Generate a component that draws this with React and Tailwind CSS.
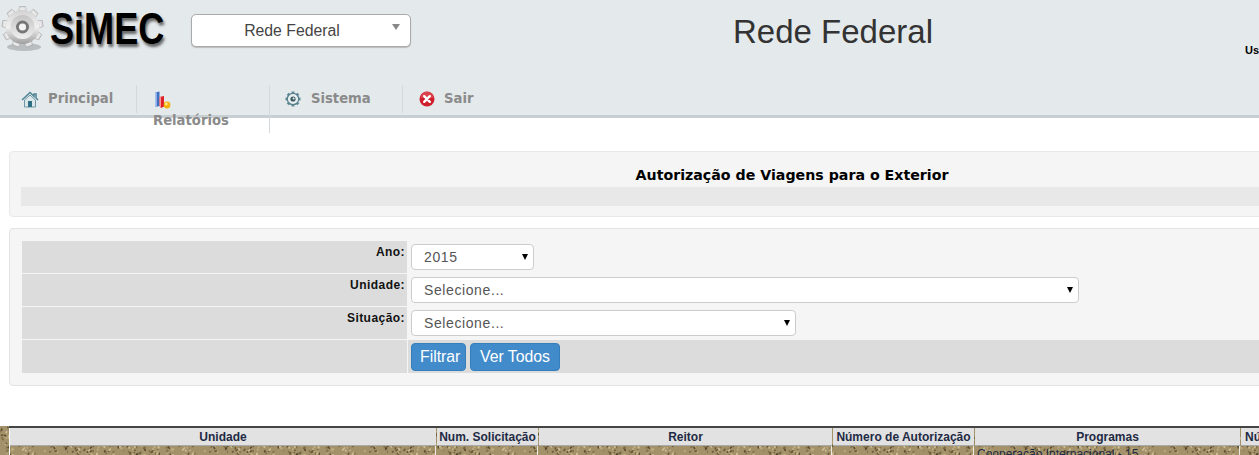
import React from "react";

function Gear() {
  const teeth = [];
  for (let i = 0; i < 9; i++) teeth.push(i * 40);
  return (
    <svg width="48" height="52" viewBox="0 0 48 52" className="shrink-0">
      <defs>
        <linearGradient id="g1" x1="0" y1="0" x2="0" y2="1">
          <stop offset="0" stopColor="#d2d2d2" />
          <stop offset="0.5" stopColor="#f0f0f0" />
          <stop offset="1" stopColor="#a0a0a0" />
        </linearGradient>
        <linearGradient id="g2" x1="0" y1="0" x2="0" y2="1">
          <stop offset="0" stopColor="#c4c4c4" />
          <stop offset="1" stopColor="#efefef" />
        </linearGradient>
      </defs>
      <ellipse cx="24" cy="47" rx="17" ry="4" fill="#8e9396" opacity="0.5" />
      <g fill="url(#g1)" stroke="#9c9c9c" strokeWidth="0.5">
        {teeth.map((a) => (
          <path key={a} d="M18.5 12 L19.5 6.5 H25.5 L26.5 12 Z" transform={`rotate(${a} 22.5 27)`} />
        ))}
      </g>
      <circle cx="22.5" cy="27" r="17" fill="url(#g1)" />
      <circle cx="22.5" cy="27" r="12" fill="url(#g2)" />
      <circle cx="22.5" cy="27" r="6.5" fill="#777" />
      <circle cx="22.5" cy="27" r="3.6" fill="#f4f4f4" />
    </svg>
  );
}

function HomeIcon() {
  return (
    <svg width="18" height="17" viewBox="0 0 18 17" className="shrink-0">
      <path d="M1 9 L9 1.5 L13 5.2 V3 H15 V7 L17 9" fill="none" stroke="#4f8494" strokeWidth="1.5" />
      <path d="M3.5 9 L9 4 L14.5 9 V16 H3.5 Z" fill="#dbe6ea" stroke="#6d97a4" strokeWidth="1" />
      <rect x="7" y="10" width="4" height="6" fill="#2f6f84" />
    </svg>
  );
}

function ChartIcon() {
  return (
    <svg width="18" height="18" viewBox="0 0 18 18" className="shrink-0">
      <path d="M2 1.5 L6.5 0.5 V15 L2 16 Z" fill="#3f6fc2" />
      <path d="M2 1.5 L3.8 1.1 V15.6 L2 16 Z" fill="#a6c3ee" />
      <path d="M6.5 6 L11 5 V15.5 L8 17 L6.5 15 Z" fill="#dc2128" />
      <path d="M6.5 6 L8 5.7 V16.6 L6.5 15 Z" fill="#f59a9a" />
      <circle cx="14" cy="14" r="3.4" fill="#f2b310" />
      <circle cx="13.3" cy="13" r="1.4" fill="#fdea8e" />
    </svg>
  );
}

function CogIcon() {
  const t = [0, 45, 90, 135, 180, 225, 270, 315];
  return (
    <svg width="16" height="16" viewBox="0 0 16 16" className="shrink-0">
      {t.map((a) => (
        <rect key={a} x="6.6" y="0.5" width="2.8" height="3" fill="#5f8792" transform={`rotate(${a} 8 8)`} />
      ))}
      <circle cx="8" cy="8" r="5.7" fill="#e8eef0" stroke="#55808c" strokeWidth="1.2" />
      <circle cx="8" cy="8" r="2.6" fill="#3f5a63" />
      <circle cx="8.6" cy="7.4" r="1" fill="#e8eef0" />
    </svg>
  );
}

function CloseIcon() {
  return (
    <svg width="16" height="16" viewBox="0 0 16 16" className="shrink-0">
      <circle cx="8" cy="8" r="7.5" fill="#cf1f2c" />
      <path d="M1.5 7 A6.5 6.5 0 0 1 14.5 7 Z" fill="#e55a63" opacity="0.6" />
      <path d="M5.2 5.2 L10.8 10.8 M10.8 5.2 L5.2 10.8" stroke="#fff" strokeWidth="2.4" strokeLinecap="round" />
    </svg>
  );
}

function Texture() {
  const marks = [];
  let s = 11;
  const r = () => ((s = (s * 16807) % 2147483647) % 1000) / 1000;
  const cols = ["#d9cba2", "#5e4f2e", "#463a20", "#c4b184", "#75643e"];
  for (let i = 0; i < 420; i++) {
    const x = r() * 160;
    const y = r() * 40;
    const dx = -2 + r() * 5;
    const dy = -3 + r() * 6;
    marks.push(
      <path
        key={i}
        d={`M${x.toFixed(1)} ${y.toFixed(1)} l${dx.toFixed(1)} ${dy.toFixed(1)}`}
        stroke={cols[i % 5]}
        strokeWidth="1.6"
        opacity="0.8"
      />
    );
  }
  return (
    <svg className="absolute inset-0 w-full h-full" aria-hidden="true">
      <defs>
        <pattern id="tex" width="160" height="40" patternUnits="userSpaceOnUse">
          <rect width="160" height="40" fill="#a3916a" />
          {marks}
        </pattern>
      </defs>
      <rect width="100%" height="100%" fill="url(#tex)" />
    </svg>
  );
}

function Arrow() {
  return (
    <span className="absolute right-[6px] top-[10px] w-0 h-0 border-l-[3px] border-r-[3px] border-t-[6px] border-l-transparent border-r-transparent border-t-black pointer-events-none" />
  );
}

function Select({ width, text }) {
  return (
    <div className={"relative " + width}>
      <select className="appearance-none block w-full h-[26px] bg-white border border-[#ccc] rounded-[4px] pl-[12px] font-['Liberation_Sans',sans-serif] text-[14px] tracking-[0.6px] text-[#555]">
        <option>{text}</option>
      </select>
      <Arrow />
    </div>
  );
}

const menuText = "font-['DejaVu_Sans',sans-serif] font-bold text-[13.2px] leading-[18px] text-[#8a8a8a]";
const labelCell = "bg-[#dcdcdc] flex justify-end pr-[2px] pt-[2px] font-['Liberation_Sans',sans-serif] font-bold text-[12px] leading-[18px] tracking-[0.45px] text-[#111]";
const btn = "h-[28px] bg-[#428bca] border border-[#357ebd] rounded-[4px] text-white font-['Liberation_Sans',sans-serif] text-[15.8px] leading-[26px] px-[8px]";
const th = "bg-[#e2e2e2] border-b border-[#aaa] h-[18px] flex items-center justify-center font-['Liberation_Sans',sans-serif] font-bold text-[12px] text-[#1f2a44] whitespace-nowrap overflow-hidden";
const cols = "grid grid-cols-[426px_101px_293px_141px_265px_200px] gap-x-[1px]";

export default function App() {
  return (
    <div className="w-[1259px] h-[455px] overflow-hidden bg-white">
      <div className="w-[1575px] flex flex-col">
        <header className="h-[118px] bg-[#e4e9ec] border-b-[3px] border-[#c8cfd3]">
          <div className="h-[85px] flex items-start">
            <div className="w-[191px] flex items-start">
              <Gear />
              <span className="inline-block origin-left scale-x-[0.82] font-['Liberation_Sans',sans-serif] font-bold text-[44px] leading-[58px] text-black [text-shadow:2px_3px_3px_#666] ml-[2px]">
                SiMEC
              </span>
            </div>
            <div className="w-[220px] h-[33px] mt-[14px] bg-white border border-[#aaa] rounded-[5px] shadow-[0_1px_1px_#bbb] flex items-center relative">
              <span className="w-[200px] pt-[1px] text-center font-['Liberation_Sans',sans-serif] text-[15.8px] text-[#444]">Rede Federal</span>
              <span className="absolute right-[10px] top-[9px] w-0 h-0 border-l-[4px] border-r-[4px] border-t-[6px] border-l-transparent border-r-transparent border-t-[#888]" />
            </div>
            <div className="ml-[10px] w-[824px] text-center font-['Liberation_Sans',sans-serif] text-[33px] leading-[38px] mt-[13px] text-[#333]">
              Rede Federal
            </div>
            <div className="mt-[44px] font-['Liberation_Sans',sans-serif] font-bold text-[11px] leading-[13px] text-black whitespace-nowrap">
              Usuário: Administrador
            </div>
          </div>
          <nav className="flex items-start h-[28px]">
            <div className="w-[137px] h-[28px] border-r border-[#d3d9dc] pl-[21px] flex items-center gap-[9px]">
              <HomeIcon />
              <span className={menuText}>Principal</span>
            </div>
            <div className="w-[133px] h-[48px] shrink-0 border-r border-[#d3d9dc] pl-[16px] flex flex-col items-start">
              <div className="mt-[6px] h-[21px]"><ChartIcon /></div>
              <span className={menuText}>Relatórios</span>
            </div>
            <div className="w-[133px] h-[28px] border-r border-[#d3d9dc] pl-[15px] flex items-center gap-[10px]">
              <CogIcon />
              <span className={menuText}>Sistema</span>
            </div>
            <div className="h-[28px] pl-[16px] flex items-center gap-[9px]">
              <CloseIcon />
              <span className={menuText}>Sair</span>
            </div>
          </nav>
        </header>

        <main className="pl-[9px] pt-[33px]">
          <section className="h-[66px] bg-[#f5f5f5] border border-[#e8e8e8] rounded-[4px] px-[11px] pt-[14px]">
            <h1 className="-mt-[1px] mb-[1px] text-center font-['DejaVu_Sans',sans-serif] font-bold text-[14.2px] leading-[21px] text-black">
              Autorização de Viagens para o Exterior
            </h1>
            <div className="h-[19px] bg-[#e8e8e8]" />
          </section>

          <section className="mt-[11px] h-[158px] bg-[#f5f5f5] border border-[#e3e3e3] rounded-[4px] pl-[12px] pt-[12px]">
            <div className="grid grid-cols-[385px_1fr] grid-rows-[32px_32px_32px_33px] gap-[1px]">
              <div className={labelCell}>Ano:</div>
              <div className="pl-[3px] pt-[3px]"><Select width="w-[123px]" text="2015" /></div>
              <div className={labelCell}>Unidade:</div>
              <div className="pl-[3px] pt-[3px]"><Select width="w-[668px]" text="Selecione..." /></div>
              <div className={labelCell}>Situação:</div>
              <div className="pl-[3px] pt-[3px]"><Select width="w-[385px]" text="Selecione..." /></div>
              <div className="bg-[#dcdcdc]" />
              <div className="bg-[#dcdcdc] pl-[3px] pt-[3px] flex gap-[4px] items-start">
                <button className={btn + " w-[55px]"}>Filtrar</button>
                <button className={btn + " w-[90px]"}>Ver Todos</button>
              </div>
            </div>
          </section>
        </main>

        <section className="mt-[40px] relative h-[40px]">
          <Texture />
          <div className="relative ml-[9px] border-t-2 border-[#444]">
            <div className={cols + " border-l border-l-white"}>
              <div className={th}>Unidade</div>
              <div className={th}>Num. Solicitação</div>
              <div className={th}>Reitor</div>
              <div className={th}>Número de Autorização</div>
              <div className={th}>Programas</div>
              <div className={th + " justify-start pl-[4px]"}>Número</div>
            </div>
            <div className={cols + " border-l border-l-white h-[20px]"}>
              <div className="border-r border-white/80" />
              <div className="border-r border-white/80" />
              <div className="border-r border-white/80" />
              <div className="border-r border-white/80" />
              <div className="border-r border-white/80 pl-[2px] font-['Liberation_Sans',sans-serif] text-[12px] leading-[16px] text-[#1f2a44] whitespace-nowrap">Cooperação Internacional - 15</div>
              <div />
            </div>
          </div>
        </section>
      </div>
    </div>
  );
}
